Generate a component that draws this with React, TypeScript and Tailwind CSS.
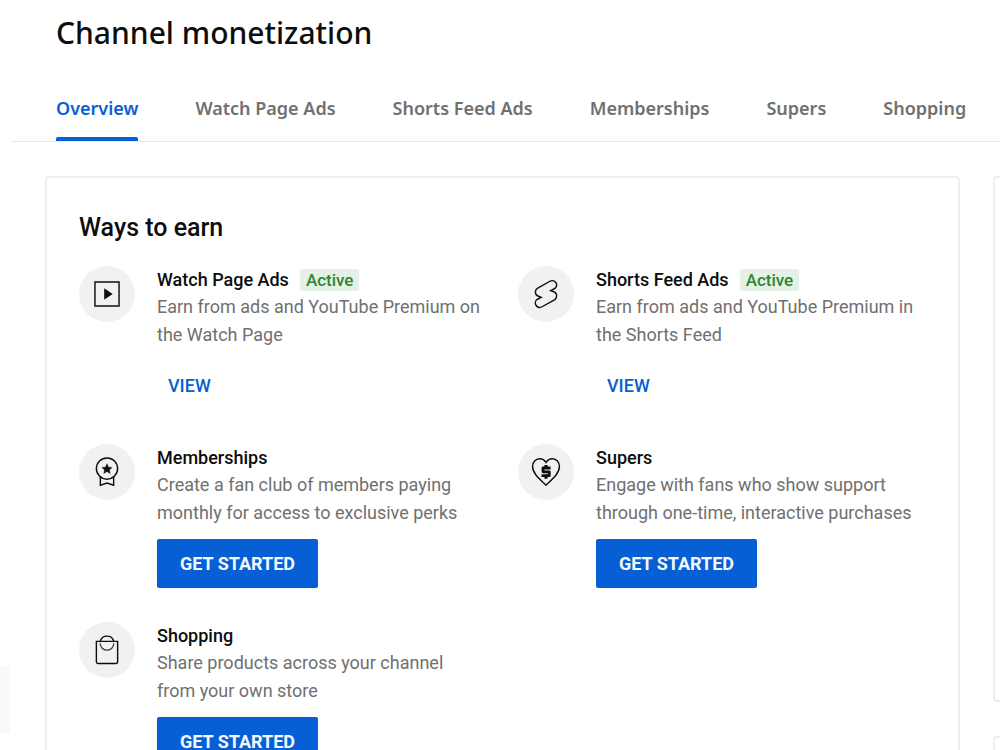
import type { ReactNode } from "react";
import clsx from "clsx";

const TABS = [
  "Overview",
  "Watch Page Ads",
  "Shorts Feed Ads",
  "Memberships",
  "Supers",
  "Shopping",
];

interface Feature {
  title: string;
  description: string;
  icon: ReactNode;
  active?: boolean;
}

function Icon({ children }: { children: ReactNode }) {
  return (
    <svg
      viewBox="0 0 24 24"
      className="h-[34px] w-[34px]"
      fill="none"
      stroke="currentColor"
      aria-hidden="true"
    >
      {children}
    </svg>
  );
}

function WatchIcon() {
  return (
    <Icon>
      <path d="M3.5 3.5h17v17h-17z" />
      <path d="M10 8l6 4-6 4z" fill="currentColor" stroke="none" />
    </Icon>
  );
}

function ShortsIcon() {
  return (
    <Icon>
      <path d="M5.9 8L14.8 3C16.6 2 18.4 2.8 19.2 4.3C20 6 19.2 7.7 17.9 8.3L15.3 9.6L17.4 10.4C19 11 19.6 12.3 19.5 13.5C19.4 14.8 18.8 15.6 18 16.1L9.2 21C7.4 22 5.5 21.3 4.8 19.7C4 18.2 4.7 16.4 6 15.7L8.6 14.4L6.3 13.4C5 12.9 4.5 11.7 4.5 10.6C4.5 9.4 5 8.5 5.9 8z" />
    </Icon>
  );
}

function MembershipIcon() {
  return (
    <Icon>
      <circle cx="12" cy="9.6" r="7.5" />
      <path d="M7.3 15.6v5.7l4.7-1.5 4.7 1.5v-5.7" />
      <path
        d="M12 6.1l1.1 2.5 2.5.2-1.9 1.7.6 2.6-2.3-1.4-2.3 1.4.6-2.6-1.9-1.7 2.5-.2z"
        fill="currentColor"
        strokeWidth="0.3"
      />
    </Icon>
  );
}

function SupersIcon() {
  return (
    <Icon>
      <path d="M12 21.3C8 17.5 2.5 13.2 2.5 8.2 2.5 5 4.700 2.600 7.400 2.600c1.900 0 3.600 1 4.600 2.700 1-1.700 2.700-2.700 4.600-2.700 2.700 0 4.900 2.400 4.900 5.600 0 5-5.500 9.300-9.500 13.100z" />
      <path
        d="M15.2 9.200H9.900v2.700h4.400v2.700H8.800"
        strokeWidth="2"
        strokeLinejoin="round"
      />
      <path d="M12 7v1.8M12 15v1.8" strokeWidth="2.2" />
    </Icon>
  );
}

function ShoppingIcon() {
  return (
    <Icon>
      <path d="M4.5 5.9h15v14.6a1 1 0 0 1-1 1h-13a1 1 0 0 1-1-1z" />
      <path d="M7.3 5.700a4.900 4.900 0 0 1 9.400 0" />
      <path d="M7.2 7.300a4.800 4.800 0 0 0 9.600 0" strokeOpacity="0.75" />
    </Icon>
  );
}

const FEATURES: Feature[] = [
  {
    title: "Watch Page Ads",
    description: "Earn from ads and YouTube Premium on the Watch Page",
    icon: <WatchIcon />,
    active: true,
  },
  {
    title: "Shorts Feed Ads",
    description: "Earn from ads and YouTube Premium in the Shorts Feed",
    icon: <ShortsIcon />,
    active: true,
  },
  {
    title: "Memberships",
    description:
      "Create a fan club of members paying monthly for access to exclusive perks",
    icon: <MembershipIcon />,
  },
  {
    title: "Supers",
    description:
      "Engage with fans who show support through one-time, interactive purchases",
    icon: <SupersIcon />,
  },
  {
    title: "Shopping",
    description: "Share products across your channel from your own store",
    icon: <ShoppingIcon />,
  },
];

function FeatureItem({ title, description, icon, active }: Feature) {
  return (
    <li className="flex items-start gap-[22px]">
      <div className="flex h-14 w-14 shrink-0 items-center justify-center rounded-full bg-[#f1f1f1]">
        {icon}
      </div>
      <div className="min-w-0 flex-1">
        <div className="flex h-[27px] items-center gap-[11px]">
          <h3 className="leading-[26px] font-medium">{title}</h3>
          {active && (
            <span className="rounded-xs bg-[#e5f1e5] px-[6px] text-[17px] leading-[22px] font-medium text-[#2b862f]">
              Active
            </span>
          )}
        </div>
        <p className="max-w-[326px] leading-7 text-[#707070]">{description}</p>
        <button
          type="button"
          className={clsx(
            "mt-3 h-[49px] rounded-xs pb-px",
            active
              ? "px-[11px] font-medium text-[#065fd4]"
              : "w-[161px] bg-[#065fd4] font-bold text-[#f4f8fd]"
          )}
        >
          {active ? "VIEW" : "GET STARTED"}
        </button>
      </div>
    </li>
  );
}

export default function App() {
  return (
    <div className="flex h-screen overflow-hidden bg-white font-['Roboto',sans-serif] text-[18px] text-[#0d0d0d]">
      {/* Edge of the collapsed side navigation */}
      <div className="w-[11px] shrink-0 pt-[666px] pr-px">
        <div className="h-[67px] bg-[#f9f9f9]" />
      </div>

      <main className="min-w-0 flex-1">
        <header className="border-b border-[#e8e8e8] pl-[45px] font-['Noto_Sans',sans-serif]">
          <h1 className="pt-3 text-[30px] leading-[42px] font-medium">
            Channel monetization
          </h1>
          <nav className="mt-[22px] flex gap-[57px]">
            {TABS.map((tab, i) => (
              <a
                key={tab}
                href="#"
                className={clsx(
                  "flex h-[65px] shrink-0 flex-col justify-between pt-[18px] text-[18px] leading-7 font-semibold",
                  i === 0 ? "text-[#065fd4]" : "text-[#707070]"
                )}
              >
                {tab}
                {i === 0 && <span className="h-1 rounded-t-xs bg-[#065fd4]" />}
              </a>
            ))}
          </nav>
        </header>

        <div className="flex items-start gap-[33px] pt-[34px] pl-[34px]">
          <section className="min-w-0 flex-1 rounded border-2 border-[#eeeeee] p-8 pb-9">
            <h2 className="text-[25px] leading-9 font-medium">Ways to earn</h2>
            <ul className="mt-5 grid grid-cols-2 gap-x-[31px] gap-y-[34px]">
              {FEATURES.map((feature) => (
                <FeatureItem key={feature.title} {...feature} />
              ))}
            </ul>
          </section>

          <aside className="w-[7px] shrink-0 space-y-[34px]">
            <div className="h-[526px] w-80 rounded border-2 border-[#eeeeee]" />
            <div className="h-80 w-80 rounded border-2 border-[#eeeeee]" />
          </aside>
        </div>
      </main>
    </div>
  );
}
